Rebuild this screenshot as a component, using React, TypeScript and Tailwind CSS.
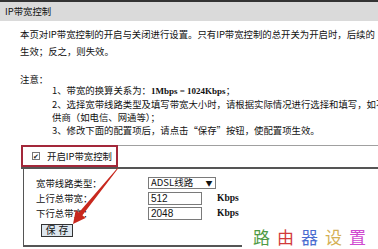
import React from "react";

const font = { fontFamily: '"Noto Sans CJK SC", "Noto Sans", sans-serif' };
const serif = { fontFamily: '"Liberation Serif", serif' };

export default function App() {
  return (
    <div className="relative w-[378px] h-[249px] overflow-hidden bg-white text-[#111]" style={font}>
      <div className="h-[21px] border-t-2 border-[#333] bg-[#dadada] pl-[5px] text-[9.4px] leading-[19px] whitespace-nowrap">
        IP带宽控制
      </div>
      <div className="pl-[20px] mt-[5px] text-[9.4px] leading-[17px] whitespace-nowrap">
        <div>本页对IP带宽控制的开启与关闭进行设置。只有IP带宽控制的总开关为开启时，后续的“</div>
        <div>生效；反之，则失效。</div>
      </div>
      <div className="pl-[20px] mt-[14px] text-[9.4px] leading-[10px] whitespace-nowrap">注意：</div>
      <div className="pl-[52px] text-[9.4px] leading-[13px] whitespace-nowrap">
        <div>
          1、带宽的换算关系为：<span className="text-[9px] font-bold" style={serif}>1Mbps = 1024Kbps</span>；
        </div>
        <div>2、选择宽带线路类型及填写带宽大小时，请根据实际情况进行选择和填写，如不</div>
        <div>供商（如电信、网通等）；</div>
        <div>3、修改下面的配置项后，请点击“保存”按钮，使配置项生效。</div>
      </div>
      <div className="ml-[21px] mt-[8px] border-t border-[#a0a0a0]">
        <div className="h-[24px] border-b-2 border-[#555]">
          <div className="-mt-px w-[97px] h-[22px] border-2 border-[#a3283a] flex items-center pl-[9px]">
            <span className="w-[8px] h-[8px] border border-[#777] bg-white flex items-center justify-center text-[7px] leading-none text-[#222]">✔</span>
            <span className="ml-[7px] text-[9.4px] whitespace-nowrap">开启IP带宽控制</span>
          </div>
        </div>
        <div className="ml-[2px] h-[78px] border-l border-b-2 border-[#555] pl-[12px] pt-[8px] text-[9.4px]">
          <div className="flex items-center h-[12px]">
            <span className="w-[112px] whitespace-nowrap">宽带线路类型：</span>
            <div className="w-[68px] h-[12px] border border-[#7a7a7a] flex items-center text-[9.5px] leading-none">
              <span className="pl-[2px] flex-1 whitespace-nowrap">ADSL线路</span>
              <span className="w-[12px] text-[7px] text-center">▼</span>
            </div>
          </div>
          <div className="flex items-center h-[13px] mt-[3px]">
            <span className="w-[112px] whitespace-nowrap">上行总带宽：</span>
            <div className="w-[54px] h-[13px] border border-[#7a7a7a] pl-[2px] text-[10px] leading-[11px]" style={{ fontFamily: '"Liberation Sans", sans-serif' }}>512</div>
            <span className="ml-[15px] text-[9.5px] font-bold" style={serif}>Kbps</span>
          </div>
          <div className="flex items-center h-[13px] mt-[2px]">
            <span className="w-[112px] whitespace-nowrap">下行总带宽：</span>
            <div className="w-[54px] h-[13px] border border-[#7a7a7a] pl-[2px] text-[10px] leading-[11px]" style={{ fontFamily: '"Liberation Sans", sans-serif' }}>2048</div>
            <span className="ml-[15px] text-[9.5px] font-bold" style={serif}>Kbps</span>
          </div>
          <div className="mt-[4px] ml-[5px] w-[32px] h-[13px] border border-[#333] bg-[#dde6ee] flex items-center justify-center text-[9.8px] leading-none tracking-[3px] pl-[3px]">
            保存
          </div>
        </div>
      </div>
      <svg className="absolute left-0 top-0" width="378" height="249">
        <polygon points="117.7,167.7 118.3,168.3 82.4,215.3 85.5,218 73,224 75.8,210 78.9,212.5" fill="#c8281e" />
      </svg>
      <div className="absolute left-[242px] top-[222px] w-[136px] h-[25px] bg-white flex items-center pl-[11px] pt-[3px] text-[17px] leading-none">
        <span className="text-[#4f9a45] w-[24px]">路</span>
        <span className="text-[#d23a3a] w-[24px]">由</span>
        <span className="text-[#4a6cd0] w-[24px]">器</span>
        <span className="text-[#d4b055] w-[24px]">设</span>
        <span className="text-[#d04ad0] w-[24px]">置</span>
      </div>
    </div>
  );
}
